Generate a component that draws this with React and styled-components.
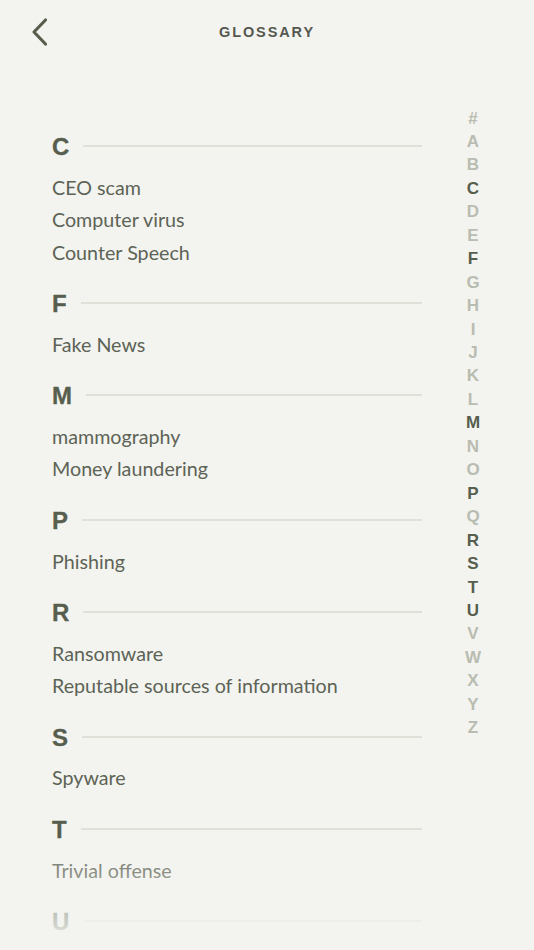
import React from "react";
import styled, { createGlobalStyle } from "styled-components";

const Global = createGlobalStyle`
  html, body { margin: 0; padding: 0; background: #f3f4ef; }
  * { box-sizing: border-box; }
`;

const Page = styled.div`
  position: relative;
  width: 100%;
  height: 950px;
  overflow: hidden;
  background: #f3f4ef;
  display: flex;
  flex-direction: column;
`;

const Header = styled.header`
  height: 62px;
  flex: none;
  display: flex;
  align-items: center;
  justify-content: center;
  position: relative;
`;

const BackButton = styled.button`
  position: absolute;
  left: 26px;
  top: 14px;
  width: 28px;
  height: 36px;
  padding: 0;
  border: none;
  background: none;
  display: flex;
  align-items: center;
  justify-content: center;
`;

const Title = styled.h1`
  margin: 0;
  font-family: "Liberation Sans", Arial, sans-serif;
  font-weight: 700;
  font-size: 14.5px;
  letter-spacing: 1.9px;
  color: #55584f;
  padding-top: 1px;
`;

const Body = styled.div`
  flex: 1;
  display: flex;
  min-height: 0;
`;

const List = styled.div`
  flex: 1;
  padding: 69px 31px 0 52px;
  display: flex;
  flex-direction: column;
  gap: 19.2px;
`;

const Section = styled.section`
  display: flex;
  flex-direction: column;
  gap: 8.5px;
`;

const HeadingRow = styled.div`
  height: 32px;
  display: flex;
  align-items: center;
  gap: 14px;
`;

const Letter = styled.h2`
  margin: 0;
  font-family: "Liberation Sans", Arial, sans-serif;
  font-weight: 700;
  font-size: 24px;
  line-height: 32px;
  color: #575e4e;
  -webkit-text-stroke: 0.3px #575e4e;
`;

const Rule = styled.div`
  flex: 1;
  height: 2px;
  background: #dfe1d9;
  margin-top: -2px;
`;

const Items = styled.ul`
  margin: 0;
  padding: 0;
  list-style: none;
`;

const Item = styled.li`
  font-family: "Lato", "Open Sans", sans-serif;
  font-size: 19.7px;
  line-height: 32.5px;
  color: #5d6356;
`;

const Index = styled.nav`
  width: 40px;
  margin-right: 41px;
  padding-top: 44.5px;
  display: flex;
  flex-direction: column;
  align-items: center;
`;

const IndexLetter = styled.span`
  height: 23.46px;
  line-height: 23.46px;
  font-family: "Liberation Sans", Arial, sans-serif;
  font-weight: 700;
  font-size: 17px;
  color: ${(p) => (p.$active ? "#575e4e" : "#b9bcb1")};
`;

const Fade = styled.div`
  position: absolute;
  left: 0;
  right: 0;
  bottom: 0;
  height: 112px;
  background: linear-gradient(to bottom, rgba(243, 244, 239, 0), rgba(243, 244, 239, 1));
  pointer-events: none;
`;

const sections = [
  { letter: "C", items: ["CEO scam", "Computer virus", "Counter Speech"] },
  { letter: "F", items: ["Fake News"] },
  { letter: "M", items: ["mammography", "Money laundering"] },
  { letter: "P", items: ["Phishing"] },
  { letter: "R", items: ["Ransomware", "Reputable sources of information"] },
  { letter: "S", items: ["Spyware"] },
  { letter: "T", items: ["Trivial offense"] },
  { letter: "U", items: [] },
];

const indexLetters = "#ABCDEFGHIJKLMNOPQRSTUVWXYZ".split("");
const activeSet = new Set(sections.map((s) => s.letter));

export default function App() {
  return (
    <>
      <Global />
      <Page>
        <Header>
          <BackButton aria-label="Back">
            <svg width="20" height="30" viewBox="0 0 20 30">
              <path
                d="M15.5 3 L4 15 L15.5 27"
                fill="none"
                stroke="#575e4e"
                strokeWidth="3.2"
                strokeLinecap="round"
                strokeLinejoin="round"
              />
            </svg>
          </BackButton>
          <Title>GLOSSARY</Title>
        </Header>
        <Body>
          <List>
            {sections.map((s) => (
              <Section key={s.letter}>
                <HeadingRow>
                  <Letter>{s.letter}</Letter>
                  <Rule />
                </HeadingRow>
                {s.items.length > 0 && (
                  <Items>
                    {s.items.map((it) => (
                      <Item key={it}>{it}</Item>
                    ))}
                  </Items>
                )}
              </Section>
            ))}
          </List>
          <Index>
            {indexLetters.map((l) => (
              <IndexLetter key={l} $active={activeSet.has(l)}>
                {l}
              </IndexLetter>
            ))}
          </Index>
        </Body>
        <Fade />
      </Page>
    </>
  );
}
